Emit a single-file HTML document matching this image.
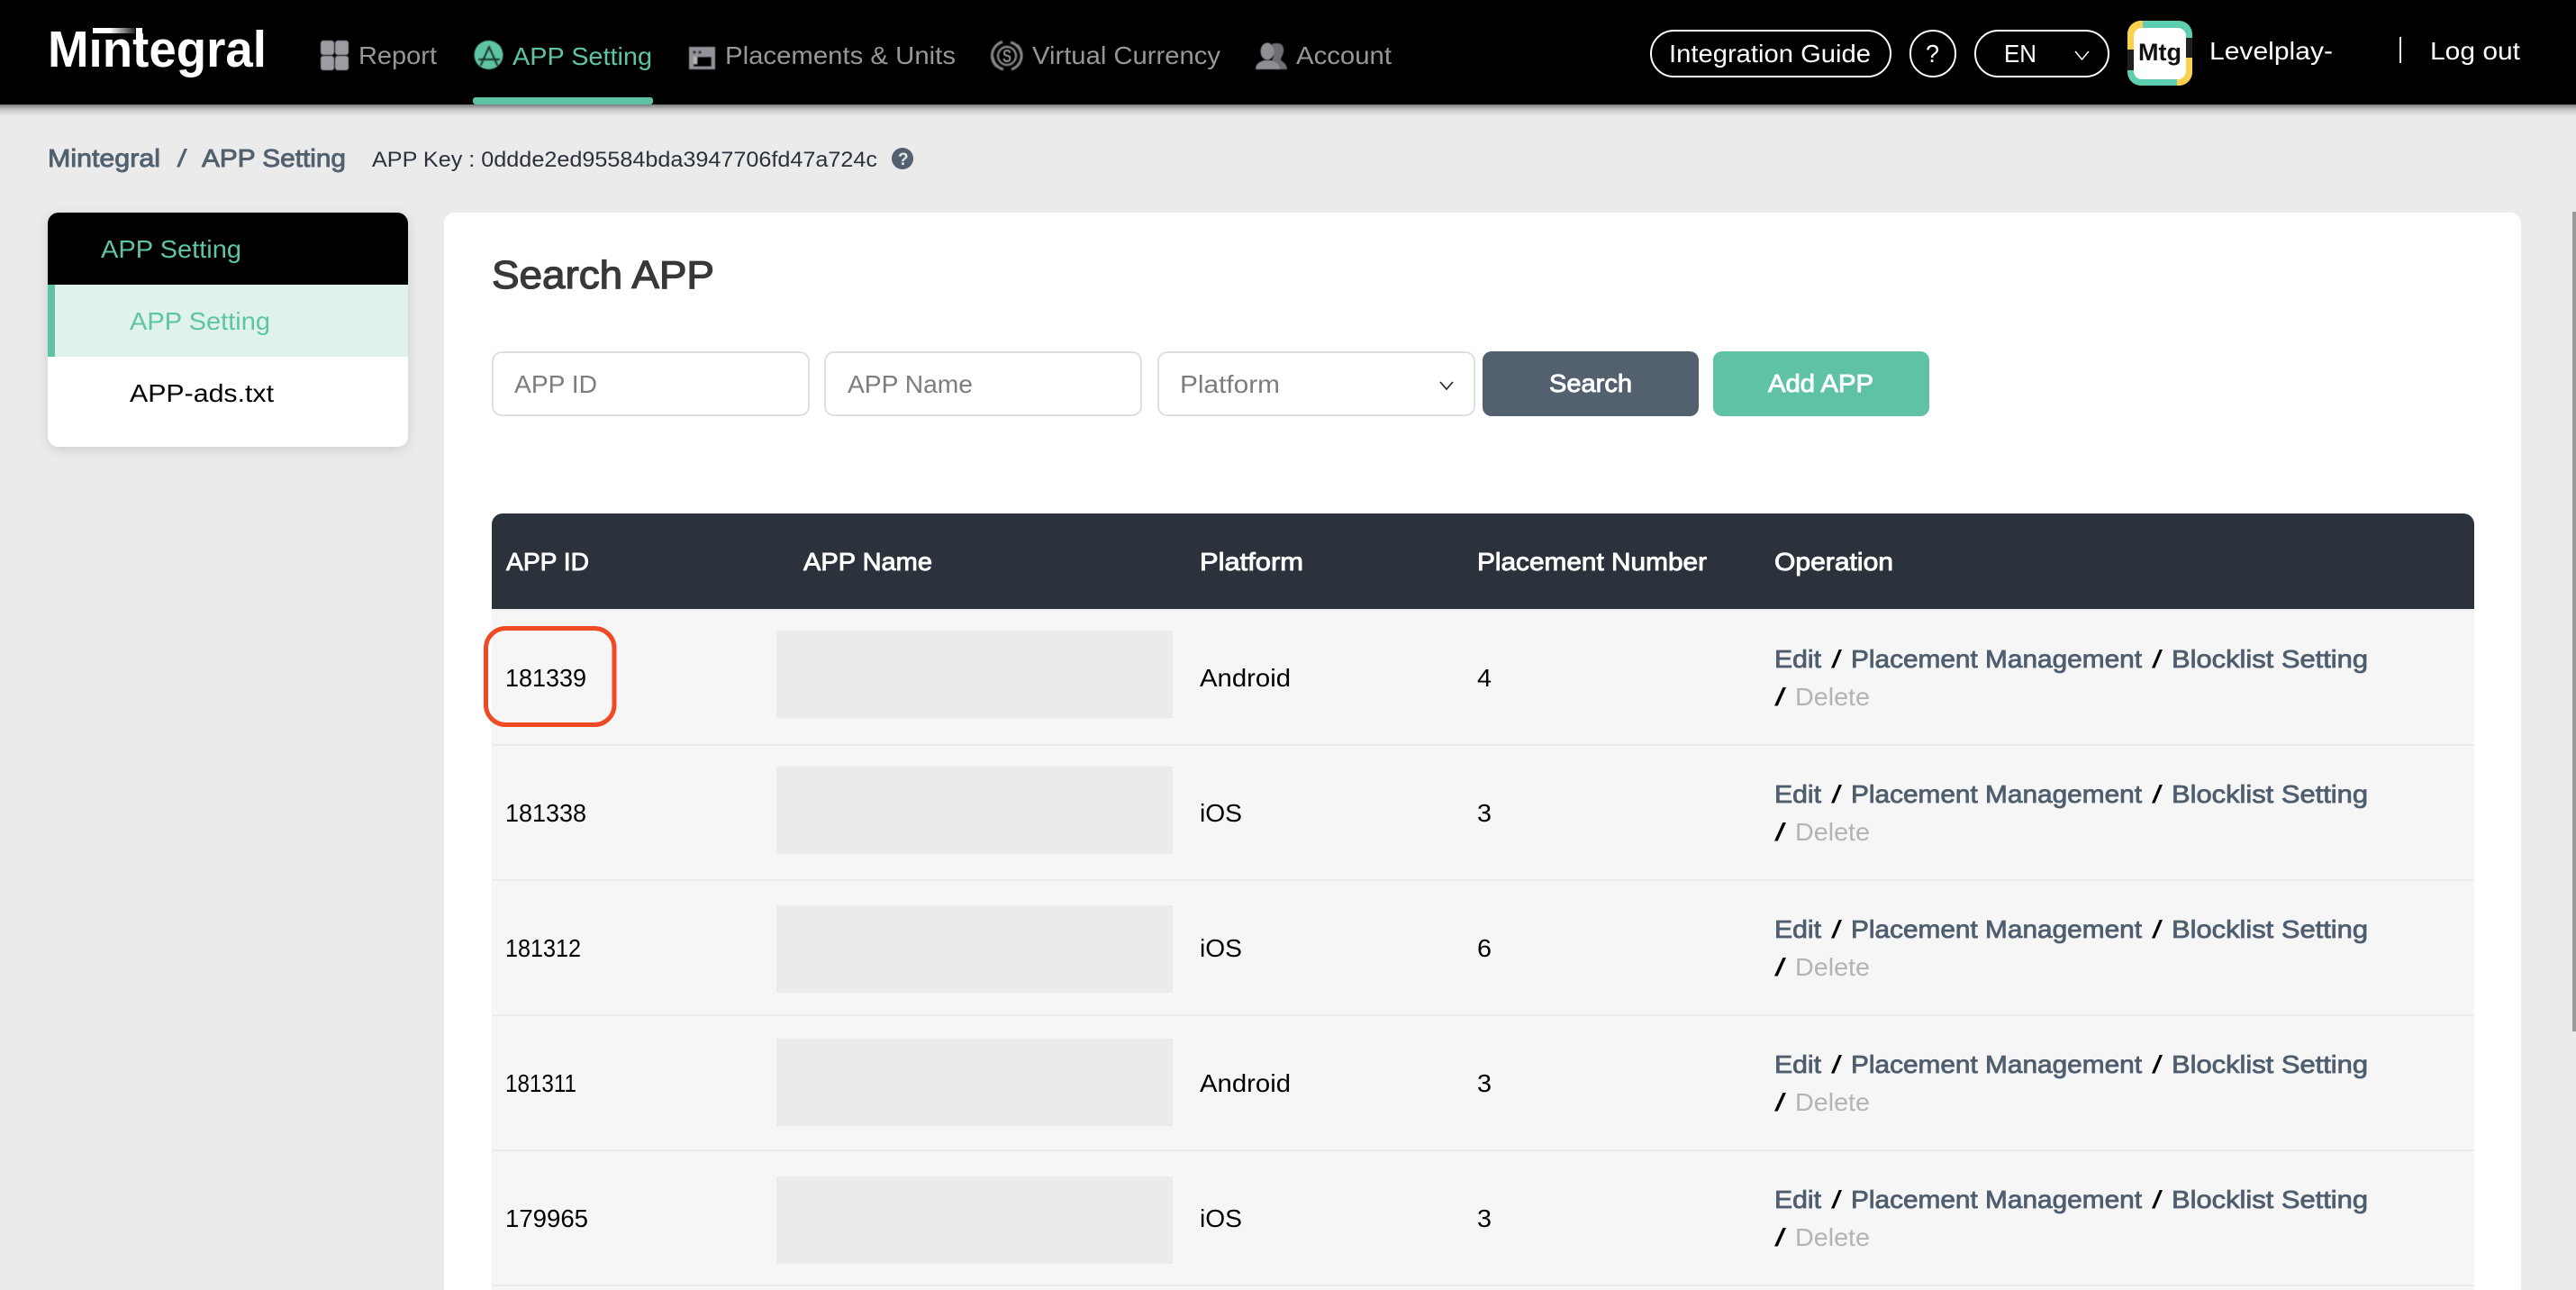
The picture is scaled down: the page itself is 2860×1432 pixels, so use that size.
<!DOCTYPE html>
<html lang="en">
<head>
<meta charset="utf-8">
<title>APP Setting</title>
<style>
html,body{margin:0;padding:0;background:#ebebeb;width:2860px;height:1432px;overflow:hidden}
svg{display:block}
text{font-family:"Liberation Sans",sans-serif;font-size:28px;white-space:pre}
.nav{fill:#96979a}
.g{fill:#5fc4a5}
.w{fill:#fff}
.k{fill:#000}
.med{stroke-width:.9px}
.crumb{fill:#52616f;stroke:#52616f;stroke-width:.9px}
.ph{fill:#7d7d7d}
.th{fill:#fff;stroke:#fff;stroke-width:.9px}
.lnk{fill:#4f5e6f;stroke:#4f5e6f;stroke-width:.8px}
.del{fill:#b4b4b4}
.box{fill:#fff;stroke:#dfdfdf;stroke-width:2}
</style>
</head>
<body>
<svg width="2860" height="1432" viewBox="0 0 2860 1432" xmlns="http://www.w3.org/2000/svg">
<defs>
<linearGradient id="hs" x1="0" y1="0" x2="0" y2="1"><stop offset="0" stop-color="#7c7c7c"/><stop offset=".45" stop-color="#c8c8c8"/><stop offset="1" stop-color="#ebebeb"/></linearGradient>
<linearGradient id="bar" x1="0" y1="0" x2="1" y2="0"><stop offset="0" stop-color="#fff"/><stop offset=".4" stop-color="#fff"/><stop offset="1" stop-color="#222"/></linearGradient>
<filter id="sd" x="-10%" y="-10%" width="120%" height="125%"><feDropShadow dx="0" dy="3" stdDeviation="6" flood-color="#000" flood-opacity=".13"/></filter>
<filter id="bl" x="-10%" y="-10%" width="120%" height="120%"><feGaussianBlur stdDeviation=".5"/></filter>
<clipPath id="av"><rect x="2362" y="23" width="72" height="72" rx="15"/></clipPath>
<clipPath id="sb"><rect x="53" y="236" width="400" height="260" rx="12"/></clipPath>
<clipPath id="th"><path d="M546 676V582a12 12 0 0 1 12-12H2735a12 12 0 0 1 12 12V676Z"/></clipPath>
</defs>

<!-- page -->
<rect width="2860" height="1432" fill="#ebebeb"/>
<rect x="0" y="116" width="2860" height="13" fill="url(#hs)"/>
<rect width="2860" height="116" fill="#000"/>

<!-- logo -->
<text x="53" y="74" class="w" style="font-size:57px;font-weight:700" textLength="243" lengthAdjust="spacingAndGlyphs">Mintegral</text>
<rect x="100" y="28" width="50" height="15" fill="#000"/>
<rect x="103" y="31" width="47" height="6" fill="url(#bar)"/>
<rect x="151" y="31" width="7" height="14" fill="#fff"/>

<!-- nav -->
<g filter="url(#bl)" fill="#9b9da3">
<rect x="356" y="45" width="15" height="16" rx="3"/><rect x="372" y="45" width="15" height="16" rx="3"/>
<rect x="356" y="62" width="15" height="16" rx="3"/><rect x="372" y="62" width="15" height="16" rx="3"/>
</g>
<text x="398" y="71" class="nav" textLength="87" lengthAdjust="spacingAndGlyphs">Report</text>

<g filter="url(#bl)">
<circle cx="542.5" cy="61" r="16" fill="#5fc4a5"/>
<path d="M543 52 534 72M543 52 552 72M532 66H554" stroke="#1d3a32" stroke-width="2.4" fill="none" stroke-linecap="round"/>
</g>
<text x="569" y="72" class="g" textLength="155" lengthAdjust="spacingAndGlyphs">APP Setting</text>
<rect x="525" y="108" width="200" height="8" rx="3" fill="#5dc2a3"/>

<g filter="url(#bl)">
<rect x="765" y="52" width="29" height="25" fill="#92949a"/>
<rect x="770" y="63" width="20" height="11" fill="#000"/>
<rect x="770" y="63" width="4" height="8" fill="#b5b6ba"/>
<circle cx="771" cy="58" r="1.8" fill="#333"/><circle cx="777" cy="58" r="1.8" fill="#333"/>
</g>
<text x="805" y="71" class="nav" textLength="256" lengthAdjust="spacingAndGlyphs">Placements &amp; Units</text>

<g filter="url(#bl)" fill="none" stroke="#85868a">
<path d="M1107 74A16 16 0 0 1 1113 46.500M1122 47A16 16 0 0 1 1134 61" stroke-width="3"/>
<path d="M1129 50A16 16 0 0 1 1123 77M1114 77A16 16 0 0 1 1102 63" stroke-width="3"/>
<circle cx="1118" cy="62" r="10" stroke-width="2.400"/>
</g>
<text x="1113" y="69" style="font-size:20px;font-weight:700;fill:#85868a" textLength="10" lengthAdjust="spacingAndGlyphs">S</text>
<text x="1146" y="71" class="nav" textLength="209" lengthAdjust="spacingAndGlyphs">Virtual Currency</text>

<g filter="url(#bl)">
<path d="M1418 48c6 0 8 5 7 10-1 4-3 6-3 8 0 2 7 4 7 11h-12c0-5-3-8-5-10 3-5 3-13 0-18 2-1 4-1 6-1Z" fill="#6f7073"/>
<ellipse cx="1407" cy="57" rx="7.500" ry="9.500" fill="#8f9094"/>
<path d="M1394 77c0-6 4-8 9-10h8c5 2 10 4 10 10Z" fill="#8f9094"/>
</g>
<text x="1439" y="71" class="nav" textLength="106" lengthAdjust="spacingAndGlyphs">Account</text>

<!-- header right -->
<rect x="1833" y="34" width="266" height="51" rx="25.500" fill="none" stroke="#fff" stroke-width="2"/>
<text x="1853" y="69" class="w" textLength="224" lengthAdjust="spacingAndGlyphs">Integration Guide</text>
<rect x="2121" y="34" width="50" height="51" rx="25" fill="none" stroke="#fff" stroke-width="2"/>
<text x="2138" y="69" class="w" textLength="15" lengthAdjust="spacingAndGlyphs">?</text>
<rect x="2193" y="34" width="148" height="51" rx="25.500" fill="none" stroke="#fff" stroke-width="2"/>
<text x="2225" y="69" class="w" textLength="36" lengthAdjust="spacingAndGlyphs">EN</text>
<path d="M2304 57 2311.500 66 2319 57" fill="none" stroke="#fff" stroke-width="1.500"/>

<g clip-path="url(#av)">
<rect x="2362" y="23" width="72" height="72" fill="#5fcdb0"/>
<rect x="2362" y="23" width="17" height="32" fill="#fbd04f"/>
<rect x="2362" y="55" width="10" height="23" fill="#231f20"/>
<rect x="2425" y="42" width="10" height="22" fill="#231f20"/>
<rect x="2417" y="64" width="18" height="31" fill="#fbd04f"/>
</g>
<rect x="2369" y="31" width="58" height="57" rx="9" fill="#fff"/>
<text x="2374" y="67" style="font-size:27px;font-weight:700;fill:#111" textLength="48" lengthAdjust="spacingAndGlyphs">Mtg</text>

<text x="2453" y="66" class="w" textLength="137" lengthAdjust="spacingAndGlyphs">Levelplay-</text>
<rect x="2664" y="41" width="2" height="29" fill="#e4e4e4"/>
<text x="2698" y="66" class="w" textLength="100" lengthAdjust="spacingAndGlyphs">Log out</text>

<!-- breadcrumb -->
<text x="53" y="185" class="crumb" textLength="125" lengthAdjust="spacingAndGlyphs">Mintegral</text>
<text x="196" y="185" style="fill:#52616f" textLength="12" lengthAdjust="spacingAndGlyphs">/</text>
<text x="224" y="185" class="crumb" textLength="160" lengthAdjust="spacingAndGlyphs">APP Setting</text>
<text x="413" y="185" style="font-size:24px;fill:#2b323c" textLength="561" lengthAdjust="spacingAndGlyphs">APP Key : 0ddde2ed95584bda3947706fd47a724c</text>
<ellipse cx="1002" cy="176" rx="12" ry="12" fill="#52616f"/>
<text x="997" y="183" style="font-size:19px;font-weight:700;fill:#e6e8ea">?</text>

<!-- sidebar -->
<rect x="53" y="236" width="400" height="260" rx="12" fill="#fff" filter="url(#sd)"/>
<g clip-path="url(#sb)">
<rect x="53" y="236" width="400" height="80" fill="#000"/>
<rect x="53" y="316" width="400" height="80" fill="#dff3ec"/>
<rect x="53" y="316" width="8" height="80" fill="#5fc4a5"/>
</g>
<text x="112" y="286" class="g" textLength="156" lengthAdjust="spacingAndGlyphs">APP Setting</text>
<text x="144" y="366" class="g" textLength="156" lengthAdjust="spacingAndGlyphs">APP Setting</text>
<text x="144" y="446" class="k" textLength="160" lengthAdjust="spacingAndGlyphs">APP-ads.txt</text>

<!-- main card -->
<path d="M493 1432V248a12 12 0 0 1 12-12H2787a12 12 0 0 1 12 12V1432Z" fill="#fff"/>
<rect x="2856" y="235" width="4" height="910" fill="#9a9a9a"/>
<text x="546" y="320" style="font-size:44px;fill:#383838;stroke:#383838;stroke-width:1.3px" textLength="247" lengthAdjust="spacingAndGlyphs">Search APP</text>

<!-- filters -->
<rect x="547" y="391" width="351" height="70" rx="10" class="box"/>
<text x="571" y="436" class="ph" textLength="92" lengthAdjust="spacingAndGlyphs">APP ID</text>
<rect x="916" y="391" width="351" height="70" rx="10" class="box"/>
<text x="941" y="436" class="ph" textLength="139" lengthAdjust="spacingAndGlyphs">APP Name</text>
<rect x="1286" y="391" width="351" height="70" rx="10" class="box"/>
<text x="1310" y="436" class="ph" textLength="111" lengthAdjust="spacingAndGlyphs">Platform</text>
<path d="M1599 424 1606 432 1613 424" fill="none" stroke="#222" stroke-width="1.600"/>
<rect x="1646" y="390" width="240" height="72" rx="10" fill="#53616f"/>
<text x="1720" y="435" class="w med" style="stroke:#fff" textLength="92" lengthAdjust="spacingAndGlyphs">Search</text>
<rect x="1902" y="390" width="240" height="72" rx="10" fill="#5fc2a4"/>
<text x="1963" y="435" class="w med" style="stroke:#fff" textLength="117" lengthAdjust="spacingAndGlyphs">Add APP</text>

<!-- table head -->
<rect x="546" y="570" width="2201" height="106" fill="#2b323c" clip-path="url(#th)"/>
<text x="562" y="633" class="th" textLength="92" lengthAdjust="spacingAndGlyphs">APP ID</text>
<text x="892" y="633" class="th" textLength="143" lengthAdjust="spacingAndGlyphs">APP Name</text>
<text x="1332" y="633" class="th" textLength="115" lengthAdjust="spacingAndGlyphs">Platform</text>
<text x="1640" y="633" class="th" textLength="255" lengthAdjust="spacingAndGlyphs">Placement Number</text>
<text x="1970" y="633" class="th" textLength="132" lengthAdjust="spacingAndGlyphs">Operation</text>

<!-- table body -->
<rect x="546" y="676" width="2201" height="756" fill="#f6f6f6"/>
<rect x="546" y="676" width="2201" height="2" fill="#efefef"/>
<rect x="546" y="826" width="2201" height="2" fill="#ebebeb"/>
<rect x="546" y="976" width="2201" height="2" fill="#ebebeb"/>
<rect x="546" y="1126" width="2201" height="2" fill="#ebebeb"/>
<rect x="546" y="1276" width="2201" height="2" fill="#ebebeb"/>
<rect x="546" y="1426" width="2201" height="2" fill="#ebebeb"/>

<rect x="862" y="700" width="440" height="97" fill="#ebebeb"/>
<rect x="862" y="851" width="440" height="97" fill="#ebebeb"/>
<rect x="862" y="1005" width="440" height="97" fill="#ebebeb"/>
<rect x="862" y="1153" width="440" height="97" fill="#ebebeb"/>
<rect x="862" y="1306" width="440" height="97" fill="#ebebeb"/>

<!-- row 1 -->
<text x="561" y="762" class="k" textLength="90" lengthAdjust="spacingAndGlyphs">181339</text>
<text x="1332" y="762" class="k" textLength="101" lengthAdjust="spacingAndGlyphs">Android</text>
<text x="1640" y="762" class="k" textLength="16" lengthAdjust="spacingAndGlyphs">4</text>
<text x="1970" y="741" class="lnk" textLength="52" lengthAdjust="spacingAndGlyphs">Edit</text>
<text x="2033" y="741" class="k" textLength="12" lengthAdjust="spacingAndGlyphs">/</text>
<text x="2055" y="741" class="lnk" textLength="323" lengthAdjust="spacingAndGlyphs">Placement Management</text>
<text x="2389" y="741" class="k" textLength="12" lengthAdjust="spacingAndGlyphs">/</text>
<text x="2411" y="741" class="lnk" textLength="218" lengthAdjust="spacingAndGlyphs">Blocklist Setting</text>
<text x="1970" y="783" class="k" textLength="13" lengthAdjust="spacingAndGlyphs">/</text>
<text x="1993" y="783" class="del" textLength="83" lengthAdjust="spacingAndGlyphs">Delete</text>

<!-- row 2 -->
<text x="561" y="912" class="k" textLength="90" lengthAdjust="spacingAndGlyphs">181338</text>
<text x="1332" y="912" class="k" textLength="47" lengthAdjust="spacingAndGlyphs">iOS</text>
<text x="1640" y="912" class="k" textLength="16" lengthAdjust="spacingAndGlyphs">3</text>
<text x="1970" y="891" class="lnk" textLength="52" lengthAdjust="spacingAndGlyphs">Edit</text>
<text x="2033" y="891" class="k" textLength="12" lengthAdjust="spacingAndGlyphs">/</text>
<text x="2055" y="891" class="lnk" textLength="323" lengthAdjust="spacingAndGlyphs">Placement Management</text>
<text x="2389" y="891" class="k" textLength="12" lengthAdjust="spacingAndGlyphs">/</text>
<text x="2411" y="891" class="lnk" textLength="218" lengthAdjust="spacingAndGlyphs">Blocklist Setting</text>
<text x="1970" y="933" class="k" textLength="13" lengthAdjust="spacingAndGlyphs">/</text>
<text x="1993" y="933" class="del" textLength="83" lengthAdjust="spacingAndGlyphs">Delete</text>

<!-- row 3 -->
<text x="561" y="1062" class="k" textLength="84" lengthAdjust="spacingAndGlyphs">181312</text>
<text x="1332" y="1062" class="k" textLength="47" lengthAdjust="spacingAndGlyphs">iOS</text>
<text x="1640" y="1062" class="k" textLength="16" lengthAdjust="spacingAndGlyphs">6</text>
<text x="1970" y="1041" class="lnk" textLength="52" lengthAdjust="spacingAndGlyphs">Edit</text>
<text x="2033" y="1041" class="k" textLength="12" lengthAdjust="spacingAndGlyphs">/</text>
<text x="2055" y="1041" class="lnk" textLength="323" lengthAdjust="spacingAndGlyphs">Placement Management</text>
<text x="2389" y="1041" class="k" textLength="12" lengthAdjust="spacingAndGlyphs">/</text>
<text x="2411" y="1041" class="lnk" textLength="218" lengthAdjust="spacingAndGlyphs">Blocklist Setting</text>
<text x="1970" y="1083" class="k" textLength="13" lengthAdjust="spacingAndGlyphs">/</text>
<text x="1993" y="1083" class="del" textLength="83" lengthAdjust="spacingAndGlyphs">Delete</text>

<!-- row 4 -->
<text x="561" y="1212" class="k" textLength="79" lengthAdjust="spacingAndGlyphs">181311</text>
<text x="1332" y="1212" class="k" textLength="101" lengthAdjust="spacingAndGlyphs">Android</text>
<text x="1640" y="1212" class="k" textLength="16" lengthAdjust="spacingAndGlyphs">3</text>
<text x="1970" y="1191" class="lnk" textLength="52" lengthAdjust="spacingAndGlyphs">Edit</text>
<text x="2033" y="1191" class="k" textLength="12" lengthAdjust="spacingAndGlyphs">/</text>
<text x="2055" y="1191" class="lnk" textLength="323" lengthAdjust="spacingAndGlyphs">Placement Management</text>
<text x="2389" y="1191" class="k" textLength="12" lengthAdjust="spacingAndGlyphs">/</text>
<text x="2411" y="1191" class="lnk" textLength="218" lengthAdjust="spacingAndGlyphs">Blocklist Setting</text>
<text x="1970" y="1233" class="k" textLength="13" lengthAdjust="spacingAndGlyphs">/</text>
<text x="1993" y="1233" class="del" textLength="83" lengthAdjust="spacingAndGlyphs">Delete</text>

<!-- row 5 -->
<text x="561" y="1362" class="k" textLength="92" lengthAdjust="spacingAndGlyphs">179965</text>
<text x="1332" y="1362" class="k" textLength="47" lengthAdjust="spacingAndGlyphs">iOS</text>
<text x="1640" y="1362" class="k" textLength="16" lengthAdjust="spacingAndGlyphs">3</text>
<text x="1970" y="1341" class="lnk" textLength="52" lengthAdjust="spacingAndGlyphs">Edit</text>
<text x="2033" y="1341" class="k" textLength="12" lengthAdjust="spacingAndGlyphs">/</text>
<text x="2055" y="1341" class="lnk" textLength="323" lengthAdjust="spacingAndGlyphs">Placement Management</text>
<text x="2389" y="1341" class="k" textLength="12" lengthAdjust="spacingAndGlyphs">/</text>
<text x="2411" y="1341" class="lnk" textLength="218" lengthAdjust="spacingAndGlyphs">Blocklist Setting</text>
<text x="1970" y="1383" class="k" textLength="13" lengthAdjust="spacingAndGlyphs">/</text>
<text x="1993" y="1383" class="del" textLength="83" lengthAdjust="spacingAndGlyphs">Delete</text>

<!-- annotation -->
<rect x="539.500" y="697.500" width="142.500" height="107" rx="22" fill="none" stroke="#f04a25" stroke-width="5"/>
</svg>
</body>
</html>
